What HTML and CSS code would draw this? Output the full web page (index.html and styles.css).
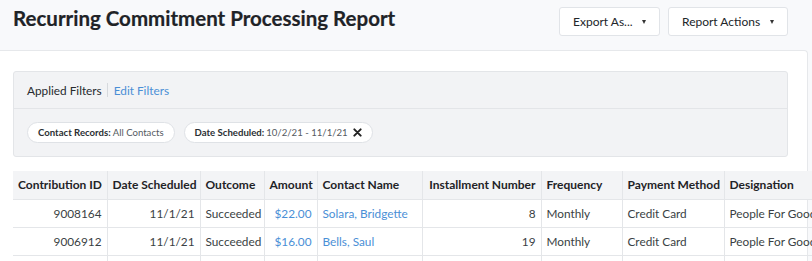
FILE: index.html
```html
<!DOCTYPE html>
<html>
<head>
<meta charset="utf-8">
<link rel="stylesheet" href="styles.css">
</head>
<body>
<header class="page-header">
  <h1 class="title">Recurring Commitment Processing Report</h1>
  <div class="actions">
    <button class="btn btn-export">Export As... <span class="caret"></span></button>
    <button class="btn btn-report">Report Actions <span class="caret"></span></button>
  </div>
</header>
<main class="card">
  <section class="filters">
    <div class="filters-head">
      <span class="filters-title">Applied Filters</span>
      <span class="sep"></span>
      <a class="link">Edit Filters</a>
    </div>
    <div class="chips">
      <span class="chip"><b>Contact Records:</b> All Contacts</span>
      <span class="chip"><b>Date Scheduled:</b> 10/2/21 - 11/1/21
        <svg class="x" viewBox="0 0 10 10" width="9" height="9"><path d="M1.5 1.5 L8.5 8.5 M8.5 1.5 L1.5 8.5" stroke="#222" stroke-width="2.2" stroke-linecap="round"/></svg>
      </span>
    </div>
  </section>
  <table class="report">
    <colgroup>
      <col class="c1"><col class="c2"><col class="c3"><col class="c4"><col class="c5"><col class="c6"><col class="c7"><col class="c8"><col class="c9">
    </colgroup>
    <thead>
      <tr>
        <th>Contribution ID</th><th>Date Scheduled</th><th>Outcome</th><th>Amount</th><th>Contact Name</th><th>Installment Number</th><th>Frequency</th><th>Payment Method</th><th>Designation</th>
      </tr>
    </thead>
    <tbody>
      <tr>
        <td class="num">9008164</td><td class="num">11/1/21</td><td>Succeeded</td><td class="num link">$22.00</td><td class="link">Solara, Bridgette</td><td class="num">8</td><td>Monthly</td><td>Credit Card</td><td>People For Good</td>
      </tr>
      <tr>
        <td class="num">9006912</td><td class="num">11/1/21</td><td>Succeeded</td><td class="num link">$16.00</td><td class="link">Bells, Saul</td><td class="num">19</td><td>Monthly</td><td>Credit Card</td><td>People For Good</td>
      </tr>
      <tr>
        <td class="num">&nbsp;</td><td></td><td></td><td></td><td></td><td></td><td></td><td></td><td></td>
      </tr>
    </tbody>
  </table>
</main>
</body>
</html>
```
FILE: styles.css
```css
* { box-sizing: border-box; }
html, body { margin: 0; padding: 0; }
body {
  font-family: Lato, "Noto Sans", sans-serif;
  color: #212529;
  background: #f8f9fb;
  width: 812px;
  height: 261px;
  overflow: hidden;
}
.page-header {
  height: 50px;
  display: flex;
  justify-content: space-between;
  align-items: flex-start;
  padding: 0 24px 0 13px;
}
.title {
  margin: 6px 0 0;
  font-size: 20.5px;
  font-weight: 700;
  color: #1f2327;
  -webkit-text-stroke: 0.2px #1f2327;
}
.actions { display: flex; gap: 8px; padding-top: 7px; }
.btn {
  font-family: inherit;
  height: 29px;
  background: #fff;
  border: 1px solid #e1e4e8;
  border-radius: 3px;
  font-size: 12px;
  color: #212529;
  padding: 0 13px;
  display: flex;
  align-items: center;
  justify-content: space-between;
}
.btn-export { width: 101px; }
.btn-report { width: 120px; }
.caret {
  width: 0; height: 0;
  border-left: 2.5px solid transparent;
  border-right: 2.5px solid transparent;
  border-top: 4px solid #333;
}
.card {
  background: #fff;
  border-top: 1px solid #e6e8eb;
  border-right: 1px solid #e6e8eb;
  border-top-right-radius: 4px;
  width: 808px;
  height: 211px;
  padding: 20px 0 0 13px;
}
.filters {
  width: 775px;
  background: #f2f3f5;
  border: 1px solid #e3e5e8;
  border-radius: 3px;
}
.filters-head {
  height: 37px;
  border-bottom: 1px solid #e3e5e8;
  display: flex;
  align-items: center;
  padding-left: 13px;
  font-size: 11.8px;
}
.filters-title { color: #262a2e; }
.sep { width: 1px; height: 14px; background: #d6d9dd; margin: 0 6px 0 5px; }
.link { color: #4a8fd6; }
.chips {
  height: 47px;
  display: flex;
  align-items: center;
  gap: 9px;
  padding-left: 13px;
}
.chip {
  height: 21px;
  background: #fff;
  border: 1px solid #dfe2e6;
  border-radius: 11px;
  font-size: 9.6px;
  color: #555a5f;
  padding: 0 10px;
  display: flex;
  align-items: center;
  gap: 2px;
}
.chip b { color: #2b2f33; font-weight: 700; }
.chip .x { margin-left: 3px; }
.report {
  margin-top: 14px;
  border-collapse: collapse;
  table-layout: fixed;
  width: 900px;
  font-size: 11.8px;
}
.c1 { width: 94px; } .c2 { width: 93px; } .c3 { width: 64px; } .c4 { width: 53px; }
.c5 { width: 105px; } .c6 { width: 119px; } .c7 { width: 81px; } .c8 { width: 102px; } .c9 { width: 189px; }
.report th {
  background: #f3f4f6;
  font-weight: 700;
  font-size: 12px;
  text-align: left;
  height: 28px;
  padding: 0 5px;
  border-left: 1px solid #e4e6e9;
  border-right: 1px solid #e4e6e9;
  white-space: nowrap;
  color: #1f2327;
}
.report th:first-child { border-left: none; }
.report td {
  height: 28px;
  padding: 0 5px;
  border: 1px solid #e4e6e9;
  white-space: nowrap;
  overflow: hidden;
  color: #3a3f44;
}
.report td:first-child { border-left: none; }
.report td.num { text-align: right; }
.report th:nth-child(4), .report th:nth-child(6) { text-align: right; }
.report td.link { color: #4a8fd6; }
```
